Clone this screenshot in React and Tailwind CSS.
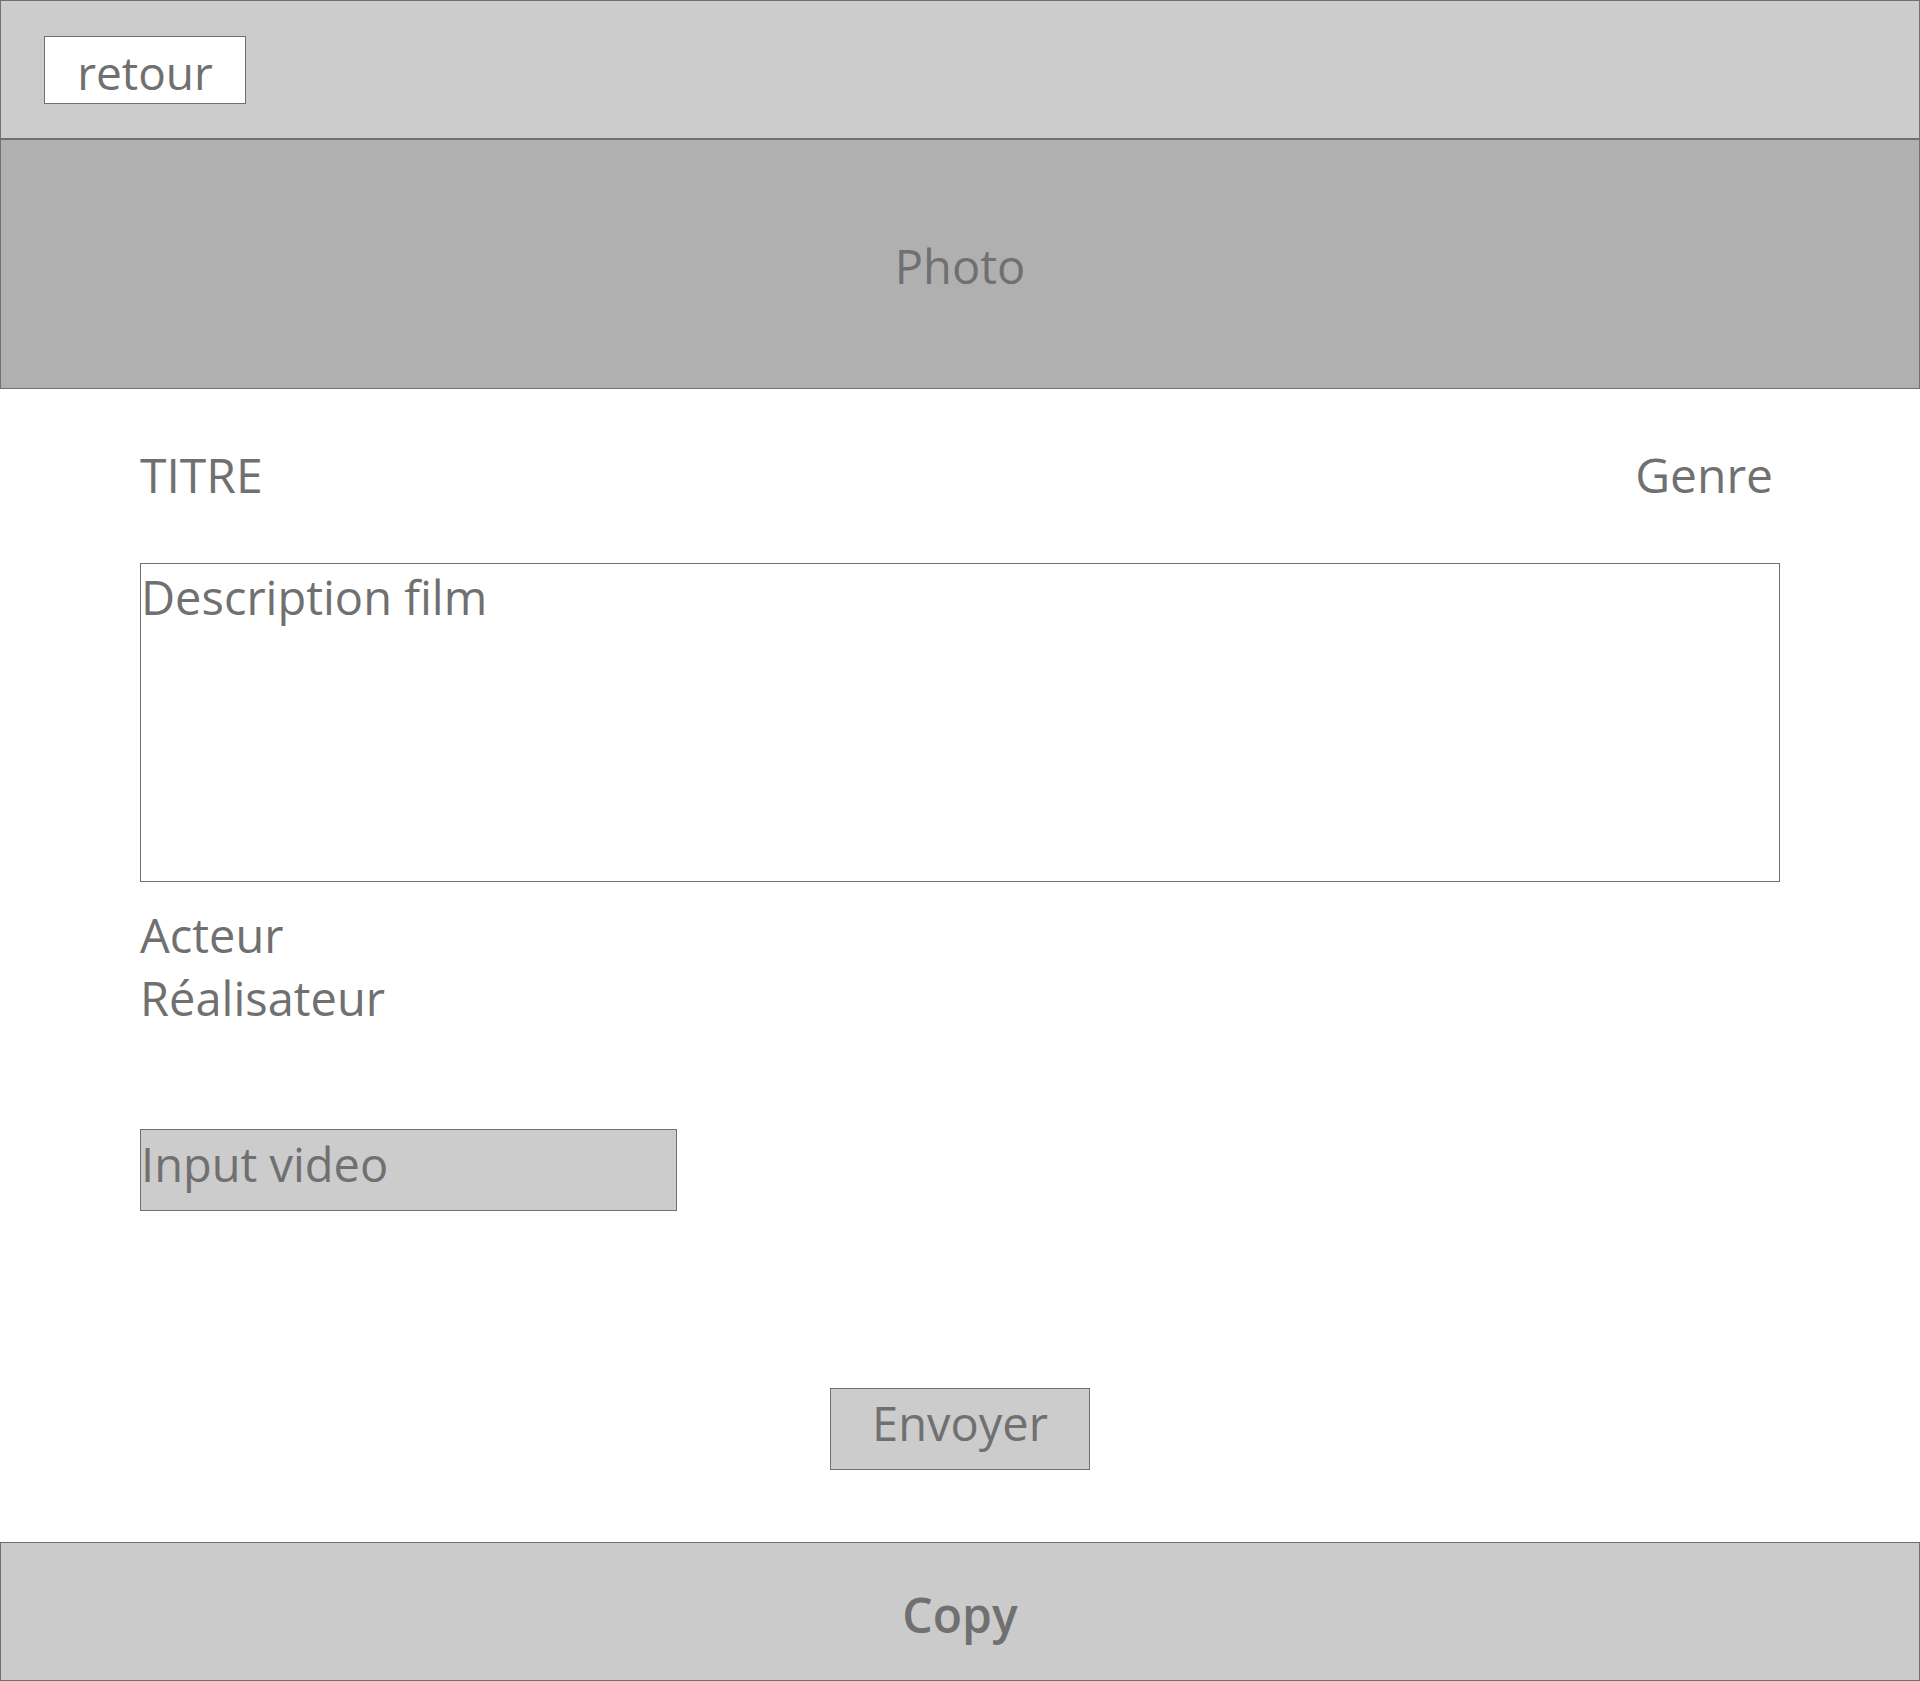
import React from 'react'

const font = { fontFamily: '"Open Sans", "Noto Sans", sans-serif' }

const App = () => {
  return (
    <div style={font} className="w-[1920px] h-[1681px] bg-white text-[#707070] flex flex-col">
      <header className="h-[139px] shrink-0 border border-[#707070] bg-[#cccccc] pl-[43px] pt-[35px]">
        <button className="w-[202px] h-[68px] border border-[#707070] bg-white flex items-center justify-center text-[46px] leading-none pt-[4px]">
          retour
        </button>
      </header>

      <section className="h-[250px] shrink-0 border border-[#707070] bg-[#b0b0b0] flex items-center justify-center text-[47px] leading-none pt-[4px]">
        Photo
      </section>

      <main className="flex-1 flex flex-col px-[140px] pt-[62px]">
        <div className="w-[1640px] flex items-start justify-between pr-[7px] text-[48px] leading-none">
          <h1>TITRE</h1>
          <span>Genre</span>
        </div>

        <div className="mt-[64px] w-[1640px] h-[319px] border border-[#707070] pt-[10px] text-[47px] leading-none">
          Description film
        </div>

        <div className="mt-[22px] flex flex-col text-[47px] leading-[63px]">
          <span>Acteur</span>
          <span>Réalisateur</span>
        </div>

        <div className="mt-[99px] w-[537px] h-[82px] border border-[#707070] bg-[#cccccc] flex items-center text-[47px] leading-none pb-[11px]">
          Input video
        </div>

        <div className="mt-[177px] flex justify-center">
          <button className="w-[260px] h-[82px] border border-[#707070] bg-[#cccccc] flex items-center justify-center text-[47px] leading-none pb-[11px]">
            Envoyer
          </button>
        </div>
      </main>

      <footer className="h-[139px] shrink-0 border border-[#707070] bg-[#cbcbcb] flex items-center justify-center text-[48px] font-semibold leading-none pt-[6px]">
        Copy
      </footer>
    </div>
  )
}

export default App
